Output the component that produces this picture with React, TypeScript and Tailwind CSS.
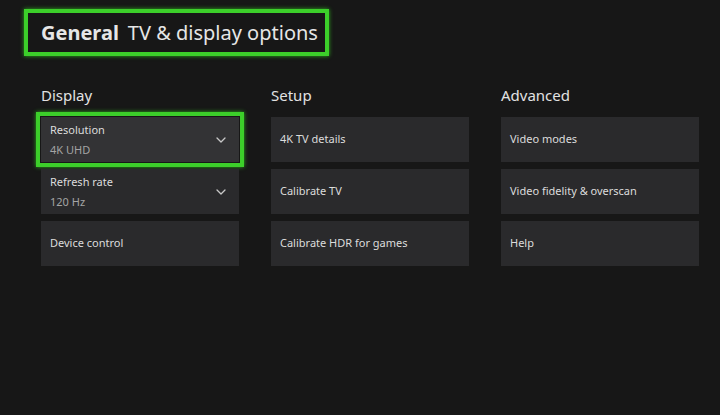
import React from 'react';

type Item = { label: string; value?: string; dropdown?: boolean; focused?: boolean };

const columns: { title: string; items: Item[] }[] = [
    {
        title: 'Display',
        items: [
            { label: 'Resolution', value: '4K UHD', dropdown: true, focused: true },
            { label: 'Refresh rate', value: '120 Hz', dropdown: true },
            { label: 'Device control' },
        ],
    },
    {
        title: 'Setup',
        items: [{ label: '4K TV details' }, { label: 'Calibrate TV' }, { label: 'Calibrate HDR for games' }],
    },
    {
        title: 'Advanced',
        items: [{ label: 'Video modes' }, { label: 'Video fidelity & overscan' }, { label: 'Help' }],
    },
];

const Chevron = () => (
    <svg width="10" height="6" viewBox="0 0 10 6" fill="none" className="shrink-0">
        <path d="M1 1l4 4 4-4" stroke="#c8c8c8" strokeWidth="1.3" strokeLinecap="round" strokeLinejoin="round" />
    </svg>
);

const Card: React.FC<{ item: Item }> = ({ item }) => (
    <div className="relative">
        {item.focused && (
            <div className="absolute -inset-[5px] border-[4px] border-[#3ccf2a] shadow-[0_0_4px_#2fae1f]" />
        )}
        <div
            className={`h-[45px] flex items-center justify-between pl-[9px] pr-[13px] ${
                item.focused ? 'bg-[#333335]' : 'bg-[#2a2a2c]'
            }`}
        >
            {item.value ? (
                <div className="flex flex-col gap-[9px] leading-none">
                    <span className="text-[11px] text-[#dcdcdc]">{item.label}</span>
                    <span className="text-[11px] text-[#a4a4a4]">{item.value}</span>
                </div>
            ) : (
                <span className="text-[11px] text-[#dcdcdc]">{item.label}</span>
            )}
            {item.dropdown && <Chevron />}
        </div>
    </div>
);

export default function App() {
    return (
        <div
            className="w-[720px] h-[415px] bg-[#171717] overflow-hidden"
            style={{ fontFamily: '"Noto Sans", "Open Sans", sans-serif' }}
        >
            <div className="pt-[9px] pl-[24px]">
                <div className="inline-flex items-center h-[47px] w-[305px] border-[4px] border-[#3ccf2a] shadow-[0_0_4px_#2fae1f] pl-[13px] text-[20px] text-[#e6e6e6] leading-none">
                    <span className="font-bold">General</span>
                    <span className="ml-[9px]">TV &amp; display options</span>
                </div>
            </div>
            <div className="flex gap-[32px] pl-[41px] pt-[32px]">
                {columns.map(col => (
                    <div key={col.title} className="w-[198px] flex flex-col">
                        <h2 className="text-[15px] text-[#e2e2e2] leading-none mb-[14px]">{col.title}</h2>
                        <div className="flex flex-col gap-[7px]">
                            {col.items.map(item => (
                                <Card key={item.label} item={item} />
                            ))}
                        </div>
                    </div>
                ))}
            </div>
        </div>
    );
}
